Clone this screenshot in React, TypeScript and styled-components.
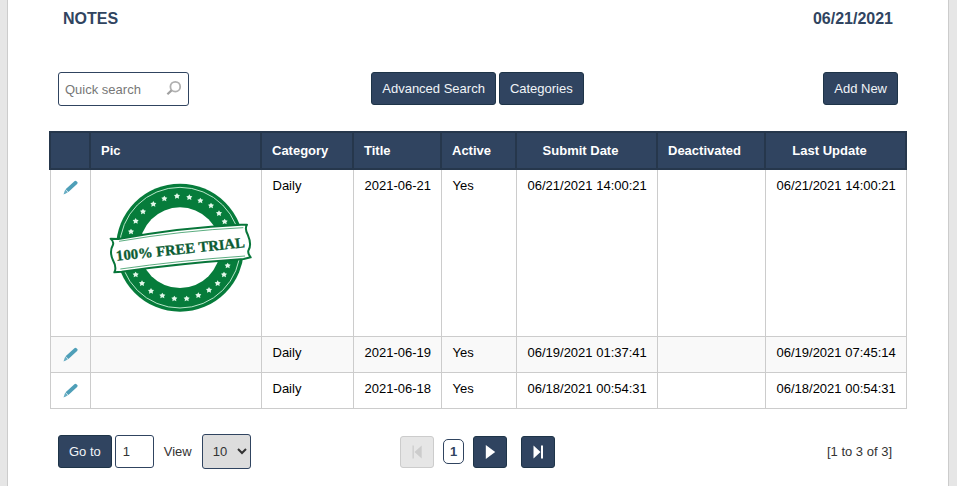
import React from "react";
import styled, { createGlobalStyle } from "styled-components";

const navy = "#304460";
const navyEdge = "#1e3448";

const GlobalStyle = createGlobalStyle`
  *, *::before, *::after { box-sizing: border-box; }
  body {
    margin: 0;
    background: #e6e6e6;
    color: #333;
    font: 13px/15px "Liberation Sans", Arial, sans-serif;
  }
  button, input, select { font: inherit; margin: 0; }
`;

const Panel = styled.main`
  min-height: 100vh;
  margin: 0 8px 0 7px;
  padding: 9px 41px 0;
  background: #fff;
  border: solid #ccc;
  border-width: 0 1px;
`;

const Heading = styled.header`
  display: flex;
  justify-content: space-between;
  padding: 0 14px;
  color: ${navy};
  font-size: 16px;
  font-weight: bold;
  line-height: 20px;
`;

const Title = styled.h1`
  margin: 0;
  font: inherit;
`;

const Bar = styled.div<{ $align: string; $top: number }>`
  display: grid;
  grid-template-columns: 1fr auto 1fr;
  align-items: ${(p) => p.$align};
  margin-top: ${(p) => p.$top}px;
  padding: 0 9px;
`;

const Group = styled.div<{ $center?: boolean }>`
  display: flex;
  align-items: center;
  gap: 3px;
  padding-right: ${(p) => (p.$center ? 1 : 0)}px;
`;

const End = styled.div<{ $pad?: number }>`
  justify-self: end;
  padding-right: ${(p) => p.$pad ?? 0}px;
`;

const Button = styled.button`
  height: 33px;
  padding: 0 10px;
  color: #f0f4f8;
  background: ${navy};
  border: 1px solid ${navyEdge};
  border-radius: 3px;
  white-space: nowrap;
  cursor: pointer;
`;

const SearchBox = styled.form`
  display: flex;
  align-items: center;
  width: 131px;
  height: 34px;
  padding: 0 6px;
  background: #fff;
  border: 1px solid ${navy};
  border-radius: 3px;
`;

const SearchInput = styled.input`
  flex: 1;
  min-width: 0;
  padding: 0;
  border: 0;
  outline: 0;
  color: #333;
  background: transparent;
  &::placeholder { color: #777; }
`;

const IconButton = styled.button`
  display: flex;
  padding: 0;
  border: 0;
  background: none;
  cursor: pointer;
`;

const Table = styled.table`
  width: 100%;
  margin-top: 25px;
  border-collapse: collapse;
  color: #000;
`;

const Th = styled.th<{ $center?: boolean }>`
  height: 37px;
  padding: 0 ${(p) => (p.$center ? 22 : 10)}px 0 10px;
  color: #fff;
  background: ${navy};
  border: 2px solid #26374c;
  text-align: ${(p) => (p.$center ? "center" : "left")};
  white-space: nowrap;
`;

const Row = styled.tr`
  background: #fff;
  &:nth-child(even) { background: #f9f9f9; }
`;

const Td = styled.td<{ $icon?: boolean }>`
  height: 36px;
  padding: ${(p) => (p.$icon ? "10px 12px" : "8px 9px 8px 11px")};
  border: 1px solid #ccc;
  vertical-align: top;
  white-space: nowrap;
  svg { display: block; }
`;

const EditLink = styled.a`
  display: block;
  width: 15px;
  height: 15px;
`;

const PageInput = styled.input`
  width: 39px;
  height: 33px;
  padding: 0 7px;
  color: #333;
  background: #fff;
  border: 1px solid ${navy};
  border-radius: 3px;
`;

const ViewLabel = styled.label`
  display: flex;
  align-items: center;
  gap: 10px;
  margin-left: 7px;
`;

const ViewSelect = styled.select`
  width: 49px;
  height: 35px;
  padding: 0 0 0 6px;
  color: #333;
  background: #ddd;
  border: 1px solid ${navy};
  border-radius: 3px;
`;

const PageButton = styled.button`
  display: flex;
  align-items: center;
  justify-content: center;
  width: 34px;
  height: 32px;
  padding: 0;
  color: #fff;
  background: ${navy};
  border: 1px solid ${navyEdge};
  border-radius: 3px;
  &:disabled {
    color: #ccc;
    background: #e6e6e6;
    border-color: #ccc;
  }
`;

const Pages = styled.nav`
  display: flex;
  align-items: center;
  gap: 14px;
  padding-right: 1px;
`;

const Current = styled.span`
  width: 21px;
  height: 25px;
  margin: 0 -5px;
  color: ${navy};
  border: 1px solid ${navy};
  border-radius: 5px;
  font-weight: bold;
  line-height: 23px;
  text-align: center;
`;

const SearchIcon = () => (
  <svg width="16" height="18" viewBox="0 0 16 18" fill="none" aria-hidden="true">
    <circle cx="9.3" cy="6.7" r="4.9" stroke="#b0b0b0" strokeWidth="1.8" />
    <path d="M5.6 10.4 L1.4 14.3" stroke="#a0a0a0" strokeWidth="2.2" />
  </svg>
);

const PencilIcon = () => (
  <svg width="15" height="15" viewBox="0 0 15 15" aria-hidden="true">
    <path d="M11.4 1.2 Q12.5 .2 13.5 1.2 L14.5 2.3 Q15 3 14.1 4 L5.4 12 L2.6 9.2 Z" fill="#4f9fb8" />
    <path d="M2.3 9.6 L4.9 12.2 L3.2 13.2 L.5 14.5 L1.5 11.5 Z" fill="#69aec4" />
  </svg>
);

const stars = [
  [120, 200], [134, 168], [156, 140], [187, 117], [220, 101], [258, 93],
  [295, 97], [328, 107], [360, 122], [384, 145], [401, 170],
  [134, 329], [153, 355], [180, 378], [214, 392], [250, 401], [287, 401],
  [322, 391], [354, 375], [380, 355], [399, 329], [410, 302],
];

const TrialStamp = () => (
  <svg width="150" height="150" viewBox="33 39 450 450" role="img" aria-label="100% Free Trial">
    <circle cx="267" cy="248" r="192" fill="#067c3b" />
    <circle cx="267" cy="248" r="181" fill="none" stroke="#b9e6ca" strokeWidth="3" />
    <circle cx="267" cy="248" r="121" fill="#fff" />
    {stars.map(([x, y]) => (
      <path
        key={`${x}-${y}`}
        transform={`translate(${x} ${y})`}
        d="M0 -9 L3 -4 L9 -3 L5 2 L6 8 L0 5 L-6 8 L-5 2 L-9 -3 L-3 -4 Z"
        fill="#e2f8ea"
      />
    ))}
    <path
      d="M59 221 L82 222 Q270 187 450 179 L468 179 Q460 191 471 211 Q483 239 472 257 Q470 265 479 277 L458 282 Q260 296 92 320 L70 322 Q78 308 66 286 Q54 260 66 239 Q69 229 59 221 Z"
      fill="#fff" stroke="#08763a" strokeWidth="6" strokeLinejoin="round"
    />
    <path d="M84 229 Q270 197 457 188 M88 312 Q260 287 462 273" fill="none" stroke="#08843f" strokeWidth="2" />
    <text
      x="268" y="267" textAnchor="middle" transform="rotate(-6 268 252)"
      fill="#0b5c33" stroke="#0b5c33" strokeWidth="1" fontFamily="Liberation Serif, serif" fontWeight="bold" fontSize="44"
    >
      100% FREE TRIAL
    </text>
  </svg>
);

const Arrow = ({ bar }: { bar?: "left" | "right" }) => (
  <svg width="16" height="16" viewBox="0 0 16 16" fill="currentColor" aria-hidden="true">
    {bar === "left" && <path d="M3.5 1.5h1.3v13H3.5z M12.7 1.5v13L5.5 8z" />}
    {bar === "right" && <path d="M11 1.5h2v13h-2z M3.5 1.5v13l7-6.5z" />}
    {!bar && <path d="M3.8 1v14l9.4-7z" />}
  </svg>
);

const notes = [
  { pic: true, title: "2021-06-21", submitted: "06/21/2021 14:00:21", updated: "06/21/2021 14:00:21" },
  { pic: false, title: "2021-06-19", submitted: "06/19/2021 01:37:41", updated: "06/19/2021 07:45:14" },
  { pic: false, title: "2021-06-18", submitted: "06/18/2021 00:54:31", updated: "06/18/2021 00:54:31" },
];

export default function App() {
  return (
    <>
      <GlobalStyle />
      <Panel>
        <Heading>
          <Title>NOTES</Title>
          <time dateTime="2021-06-21">06/21/2021</time>
        </Heading>

        <Bar $align="start" $top={43}>
          <SearchBox onSubmit={(e) => e.preventDefault()}>
            <SearchInput type="text" placeholder="Quick search" aria-label="Quick search" />
            <IconButton type="submit" aria-label="Search"><SearchIcon /></IconButton>
          </SearchBox>
          <Group $center>
            <Button type="button">Advanced Search</Button>
            <Button type="button">Categories</Button>
          </Group>
          <End><Button type="button">Add New</Button></End>
        </Bar>

        <Table>
          <colgroup>
            <col width="40" />
            <col width="171" />
            <col width="92" />
            <col width="88" />
            <col width="75" />
            <col width="141" />
            <col width="108" />
            <col width="141" />
          </colgroup>
          <thead>
            <tr>
              <Th aria-label="Edit" />
              <Th>Pic</Th>
              <Th>Category</Th>
              <Th>Title</Th>
              <Th>Active</Th>
              <Th $center>Submit Date</Th>
              <Th>Deactivated</Th>
              <Th $center>Last Update</Th>
            </tr>
          </thead>
          <tbody>
            {notes.map((n) => (
              <Row key={n.title}>
                <Td $icon><EditLink href="#edit" aria-label={`Edit ${n.title}`}><PencilIcon /></EditLink></Td>
                <Td>{n.pic && <TrialStamp />}</Td>
                <Td>Daily</Td>
                <Td>{n.title}</Td>
                <Td>Yes</Td>
                <Td>{n.submitted}</Td>
                <Td />
                <Td>{n.updated}</Td>
              </Row>
            ))}
          </tbody>
        </Table>

        <Bar $align="center" $top={25}>
          <Group>
            <Button type="button">Go to</Button>
            <PageInput type="text" defaultValue="1" aria-label="Page number" />
            <ViewLabel>
              View
              <ViewSelect defaultValue="10">
                <option>10</option>
                <option>20</option>
                <option>50</option>
              </ViewSelect>
            </ViewLabel>
          </Group>
          <Pages aria-label="Pagination">
            <PageButton type="button" disabled aria-label="First page"><Arrow bar="left" /></PageButton>
            <Current aria-current="page">1</Current>
            <PageButton type="button" aria-label="Next page"><Arrow /></PageButton>
            <PageButton type="button" aria-label="Last page"><Arrow bar="right" /></PageButton>
          </Pages>
          <End $pad={6}>[1 to 3 of 3]</End>
        </Bar>
      </Panel>
    </>
  );
}
